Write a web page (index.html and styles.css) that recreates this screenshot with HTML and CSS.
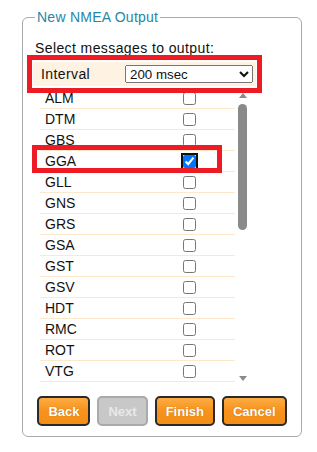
FILE: index.html
```html
<!DOCTYPE html>
<html lang="en">
<head>
    <meta charset="UTF-8">
    <title>New NMEA Output</title>
    <link rel="stylesheet" href="styles.css">
</head>
<body>
    <div class="page">
        <fieldset class="wizard">
            <legend>New NMEA Output</legend>
            <p class="prompt">Select messages to output:</p>

            <div class="interval">
                <label for="rate">Interval</label>
                <select id="rate">
                    <option>200 msec</option>
                    <option>500 msec</option>
                    <option>1 sec</option>
                </select>
            </div>

            <div class="list-wrap">
                <div class="msg-list">
                    <div class="msg-row"><span>ALM</span><input type="checkbox"></div>
                    <div class="msg-row"><span>DTM</span><input type="checkbox"></div>
                    <div class="msg-row"><span>GBS</span><input type="checkbox"></div>
                    <div class="msg-row"><span>GGA</span><input type="checkbox" class="focused" checked></div>
                    <div class="msg-row"><span>GLL</span><input type="checkbox"></div>
                    <div class="msg-row"><span>GNS</span><input type="checkbox"></div>
                    <div class="msg-row"><span>GRS</span><input type="checkbox"></div>
                    <div class="msg-row"><span>GSA</span><input type="checkbox"></div>
                    <div class="msg-row"><span>GST</span><input type="checkbox"></div>
                    <div class="msg-row"><span>GSV</span><input type="checkbox"></div>
                    <div class="msg-row"><span>HDT</span><input type="checkbox"></div>
                    <div class="msg-row"><span>RMC</span><input type="checkbox"></div>
                    <div class="msg-row"><span>ROT</span><input type="checkbox"></div>
                    <div class="msg-row"><span>VTG</span><input type="checkbox"></div>
                    <div class="msg-row"><span></span><input type="checkbox"></div>
                </div>
                <!-- scrollbar of the message list -->
                <div class="scrollbar">
                    <div class="sb-btn"><span class="arrow-up"></span></div>
                    <div class="sb-track"><div class="sb-thumb"></div></div>
                    <div class="sb-btn"><span class="arrow-down"></span></div>
                </div>
            </div>

            <div class="buttons">
                <button class="btn">Back</button>
                <button class="btn" disabled>Next</button>
                <button class="btn">Finish</button>
                <button class="btn">Cancel</button>
            </div>
        </fieldset>

        <!-- annotation boxes drawn over the form -->
        <div class="mark mark-interval"></div>
        <div class="mark mark-gga"></div>
    </div>
</body>
</html>
```

FILE: styles.css
```css
/* General page */
body {
    margin: 0;
    background-color: #fff;
    color: #111;
    font-family: "Liberation Sans", Arial, sans-serif;
    font-size: 14px;
}

.page {
    position: relative;
    padding: 9px 0 0 22px;
}

/* Wizard frame */
.wizard {
    box-sizing: border-box;
    width: 280px;
    margin: 0;
    padding: 0 12px 10px;
    border: 1px solid #a9a9a9;
    border-radius: 6px;
    background-color: #fff;
}

.wizard legend {
    padding: 0 2px;
    color: #2786a8;
    font-size: 14px;
    line-height: 16px;
    letter-spacing: 0.25px;
}

.prompt {
    margin: 15px 0 0;
    line-height: 16px;
    letter-spacing: 0.4px;
}

/* Interval row */
.interval {
    display: flex;
    align-items: center;
    width: 223px;
    height: 24px;
    margin: 6px 0 0 -2px;
    padding-left: 8px;
    box-sizing: border-box;
    background-color: #fef3e2;
}

.interval label {
    width: 84px;
    letter-spacing: 0.4px;
}

.interval select {
    width: 128px;
    height: 18px;
    font-family: "Liberation Sans", Arial, sans-serif;
    font-size: 13.33px;
    color: #111;
}

/* Message list */
.list-wrap {
    display: flex;
    height: 298px;
    margin: 2px 0 0 5px;
}

.msg-list {
    width: 195px;
    overflow: hidden;
}

.msg-row {
    display: grid;
    grid-template-columns: 138px 13px;
    align-items: center;
    height: 20px;
    padding-left: 5px;
    border-bottom: 1px solid #fde8cc;
    line-height: 20px;
}

.msg-row input {
    width: 13px;
    height: 13px;
    margin: 1px 0 0;
}

.msg-row input.focused {
    outline: 2px solid #111;
    outline-offset: 0;
}

/* Scrollbar */
.scrollbar {
    display: flex;
    flex-direction: column;
    width: 15px;
}

.sb-btn {
    display: flex;
    justify-content: center;
    align-items: center;
    height: 14px;
}

.sb-btn:last-child {
    height: 15px;
}

.arrow-up,
.arrow-down {
    width: 0;
    height: 0;
    border-left: 4.5px solid transparent;
    border-right: 4.5px solid transparent;
}

.arrow-up {
    border-bottom: 5px solid #8a8a8a;
}

.arrow-down {
    border-top: 5px solid #8a8a8a;
}

.sb-track {
    flex: 1;
    display: flex;
    justify-content: center;
}

.sb-thumb {
    width: 9px;
    height: 126px;
    margin-top: 2px;
    border-radius: 5px;
    background-color: #8a8a8a;
}

/* Buttons */
.buttons {
    display: flex;
    justify-content: center;
    gap: 7px;
    margin-top: 10px;
}

.btn {
    height: 30px;
    padding: 0 9px;
    border: 2px solid #2a2a2a;
    border-radius: 5px;
    background: linear-gradient(#fdad45, #f7941e 45%, #f38d14);
    color: #fff;
    font-family: "Liberation Sans", Arial, sans-serif;
    font-size: 13px;
    font-weight: bold;
    text-shadow: 0 0 1px rgba(120, 60, 0, 0.5);
}

.btn:disabled {
    border-color: #aaa;
    background: #c8c8c8;
    color: #e8e8e8;
    text-shadow: none;
}

/* Red annotation boxes */
.mark {
    position: absolute;
    box-sizing: border-box;
    border: 5px solid #ed1c24;
}

.mark-interval {
    left: 27px;
    top: 55px;
    width: 235px;
    height: 38px;
}

.mark-gga {
    left: 32px;
    top: 145px;
    width: 190px;
    height: 28px;
}
```
